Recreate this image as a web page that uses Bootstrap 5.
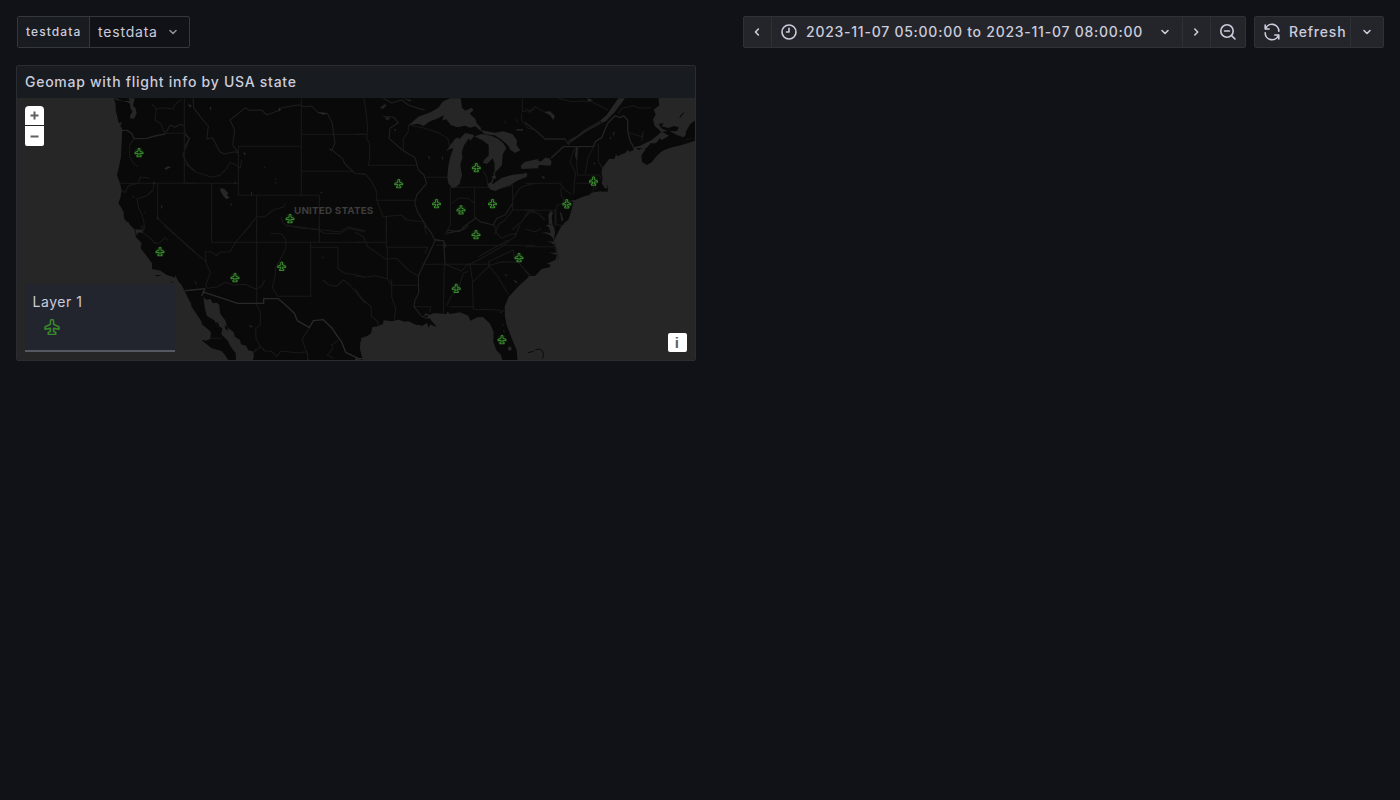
<!DOCTYPE html>
<html lang="en">
<head>
<meta charset="utf-8">
<title>Geomap dashboard</title>
<link href="https://cdn.jsdelivr.net/npm/bootstrap@5.3.0/dist/css/bootstrap.min.css" rel="stylesheet">
<style>
body{background:#111217;color:#ccccdc;font-family:Inter,"Liberation Sans",sans-serif;font-size:14px;line-height:22px;letter-spacing:.15px}
.toolbar{height:32px}
.variable{border:1px solid #36373d;border-radius:2px;width:173px;height:32px;margin-left:1px}
.variable-label{background:#181b1f;border-right:1px solid #36373d;width:72px;font-size:12px;font-weight:500}
.tool-btn{--bs-btn-bg:#24252b;--bs-btn-color:#ccccdc;--bs-btn-border-color:#303137;--bs-btn-hover-bg:#2c2d33;--bs-btn-hover-color:#ccccdc;--bs-btn-border-radius:2px;--bs-btn-font-size:14px;--bs-btn-font-weight:500;--bs-btn-line-height:22px;--bs-btn-padding-x:0;--bs-btn-padding-y:0;background:#24252b;height:32px;white-space:nowrap}
.w-arrow{width:29px;padding-right:2px}.w-range{width:412px}.w-zoom{width:36px}.w-refresh{width:97px}.w-menu{width:34px}
.panel{width:680px;height:296px;background:#181b1f;border:1px solid #2b2c31;border-radius:2px}
.panel-title{height:32px;font-size:14px;font-weight:500;line-height:32px}
.geomap{height:262px;background:#262626}
.zoom-key{width:19px;height:19px;background:#fff;color:#606060;font:bold 15px/20px "Liberation Sans",sans-serif}
.legend{width:150px;height:68px;left:8px;bottom:8px;background:#22252e;border-bottom:2px solid #555961}
.ln{fill:none;stroke:#191919;stroke-width:3.2;stroke-linejoin:round}
.ln2{fill:none;stroke:#232323;stroke-width:4;stroke-linejoin:round}
.sea{fill:#262626}.soil{fill:#090909}
.ic{fill:none;stroke:currentColor;stroke-width:1.6;stroke-linecap:round;stroke-linejoin:round}
</style>
</head>
<body>
<header class="d-flex justify-content-between mx-3 mt-3 toolbar">
  <div class="variable d-flex">
    <label class="variable-label d-flex align-items-center ps-2"><span style="letter-spacing:1.1px">testdata</span></label>
    <div class="d-flex flex-fill align-items-center justify-content-between ps-2 pe-2"><span style="letter-spacing:.8px">testdata</span>
      <svg class="ic" width="16" height="16" style="color:#8e8e99"><path d="M5 6.5 8 9.5 11 6.5"/></svg></div>
  </div>
  <div class="d-flex gap-2">
    <div class="btn-group">
      <button class="btn tool-btn w-arrow d-flex align-items-center justify-content-center"><svg class="ic" width="16" height="16"><path d="M9.4 5 6.5 8 9.4 11"/></svg></button>
      <button class="btn tool-btn w-range d-flex align-items-center"><svg class="ic" width="18" height="18" style="margin-left:8px"><circle cx="9" cy="9" r="7"/><path d="M9 5.3V9H6.5"/></svg><span style="margin-left:8px;letter-spacing:.75px">2023-11-07 05:00:00 to 2023-11-07 08:00:00</span><svg class="ic ms-auto" width="16" height="16" style="margin-right:9px"><path d="M5 6.5 8 9.5 11 6.5"/></svg></button>
      <button class="btn tool-btn w-arrow d-flex align-items-center justify-content-center"><svg class="ic" width="16" height="16"><path d="M6.8 5 9.7 8 6.8 11"/></svg></button>
      <button class="btn tool-btn w-zoom d-flex align-items-center justify-content-center"><svg class="ic" width="18" height="18"><circle cx="8" cy="8" r="6.2"/><path d="M5.5 8h5M12.6 12.6 16 16"/></svg></button>
    </div>
    <div class="btn-group">
      <button class="btn tool-btn w-refresh d-flex align-items-center"><svg class="ic" width="18" height="18" style="margin-left:8px"><path d="M2.2 2v4h4M2.6 5.8A6.8 6.8 0 0 1 15.8 8.2M15.8 16v-4h-4M15.4 12.2A6.8 6.8 0 0 1 2.2 9.8"/></svg><span style="margin-left:8px;letter-spacing:.8px">Refresh</span></button>
      <button class="btn tool-btn w-menu d-flex align-items-center justify-content-center"><svg class="ic" width="16" height="16"><path d="M5 6.5 8 9.5 11 6.5"/></svg></button>
    </div>
  </div>
</header>
<main class="panel ms-3 overflow-hidden" style="margin-top:17px">
  <div class="panel-title px-2"><span style="letter-spacing:.73px">Geomap with flight info by USA state</span></div>
  <div class="geomap position-relative">
  <svg class="d-block" width="678" height="262" viewBox="17 98 678 262">
    <defs><symbol id="plane" viewBox="0 0 16 16" overflow="visible"><path d="M8 .4C6.9 .4 6.4 1.5 6.4 2.6V5.3L1 8V10.2L6.4 9.4V12.4L4.3 13.5V15.5H11.7V13.5L9.6 12.4V9.4L15 10.2V8L9.6 5.3V2.6C9.6 1.5 9.1 .4 8 .4Z" fill="none" stroke="#37872d" stroke-linejoin="round"/></symbol></defs>
    <rect class="soil" x="17" y="98" width="678" height="262"/>
    <!-- Pacific northwest -->
    <g transform="translate(15 95) scale(.33333)">
      <path class="sea" d="M0 0H293L300 20 304 24 302 45 309 65 312 85 322 80 316 92 322 102 320 145 318 185 312 215 306 240 314 262 320 285 317 305 310 325 320 340 326 352 327 370 340 388 352 403 362 412 360 430H0Z"/>
      <path class="sea" d="M296 9 304 15 335 21 345 26 346 38 352 50 345 62 347 72 358 70 365 55 362 40 354 32 359 10H340L345 18 322 18 304 10Z"/>
      <path class="soil" d="M300 16 322 24 340 27 343 40 350 50 343 58 343 80 310 80 303 45Z"/>
      <path class="ln2" d="M321 106H336L350 115 357 131 395 130 420 123 450 117"/>
      <path class="ln" style="stroke:#1f1f1f" d="M450 117 456 107 466 90 480 97 496 88 508 92 510 116 524 130 503 180 520 210 540 230"/>
      <path class="ln" d="M411 28 424 42 420 75 438 87 446 108 456 115H510M424 42 450 38 474 43 480 28 500 14M508 10V266M314 265H540M428 265V370L540 472M357 131 344 150V185L355 205 370 215M320 285 330 293 340 272 370 265 376 246 405 250M417 265 414 285 395 303 366 311 371 340 382 360 388 390 378 410"/>
      <path d="M448 220 460 214 468 217 452 224ZM413 262H419L417 270ZM437 329 443 335 439 342ZM425 366 431 368 429 376ZM352 305l5-2-2 6ZM388 350l3 2-2 4Z" fill="#262626"/>
    </g>
    <!-- California -->
    <g transform="translate(15 225) scale(.33333)">
      <path class="sea" d="M0-10H340L345 0 358 13 362 35 380 55 377 70 400 100 411 115 411 132 437 137 455 150 476 156 500 180 515 210 530 245 560 290V420H0Z"/>
      <path class="sea" d="M360 13 380 14 384 24 370 22 366 32Z"/>
      <path class="ln" d="M378 0 385 25 405 38 420 55 435 53 450 38 460 47M385 18 390 0M447 0 540 82M505 198 560 193"/>
      <path class="soil" d="M421 151 430 150 440 152 425 154ZM466 168 475 174 470 174Z"/>
    </g>
    <!-- Rockies -->
    <g transform="translate(185 95) scale(.33333)">
      <path class="ln" d="M349 10V301M349 118H540M349 229H508M160 301V154H349M160 301H403V420M0 265H160M80 265V420M215 301V420M0 205 30 230 60 240 80 247 105 241 125 220 135 203 150 208 165 220 170 195"/>
      <path class="ln2" d="M24 10 26 38 48 68 70 93 65 132 82 128 105 170 118 177 150 170 160 174 143 150 149 105 135 75 182 38 192 46 230 45 245 60 285 45 290 38 340 30 360 35 380 33 400 54 427 55 442 85 450 145 441 165 472 190 480 207 510 235 540 238M0 120 12 130 0 155" style="stroke-width:3.2;stroke:#1e1e1e"/>
      <path class="ln" d="M300 325 297 335 265 345 240 365 215 365 175 415M288 365 293 382 305 393 345 395 385 403 465 410 490 395 540 408"/>
      <path d="M105 280 117 281 123 287 130 295 126 300 134 308 124 313 117 305 107 290ZM74 36 79 36 77 49ZM283 37l5 8-10 5ZM175 171 184 176 178 180ZM148 260 153 262 150 270ZM270 248l3 4-3 5ZM272 260l3 4-3 3ZM198 291h3v9h-3ZM237 214l3 3-3 3ZM136 325l5 2-3 7ZM430 161l10 1-1 5ZM404 291l10 1-4 3ZM397 50l31 5-13 5ZM8 28l12 2-4 9Z" fill="#272727"/>
    </g>
    <!-- Southwest and northern Mexico -->
    <g transform="translate(185 225) scale(.33333)">
      <path class="sea" d="M-30 150 0 207 18 235 20 255 35 270 45 293 68 312 78 322 76 342 63 347 55 345 50 346 80 370 110 378 120 390 131 407H-30Z"/>
      <path class="sea" d="M55 217 66 225 76 221 83 235 96 233 103 240 105 265 122 288 126 307 145 320 150 335 165 345 168 358 183 362 190 376 203 379 207 392 203 407H153L152 385 137 365 128 347 109 328 112 310 94 300 88 286 66 273 60 253Z"/>
      <path class="soil" d="M90 291 99 293 103 304 96 302ZM119 301 126 306 130 317 121 312Z"/>
      <path class="sea" d="M540 334 526 350 525 375 540 405Z"/>
      <path class="ln" d="M80 0V52H540M215 0V240L226 262V300L212 310 213 340 226 365 240 378 260 379 275 395 288 378 340 384 365 380 370 405M377 52V214H278M377 67H459V132L480 145 510 149 540 157M403 0V52M0 57 62 109M198 0 155 47 135 80 105 82 95 92 78 80H60L64 117 76 142 62 182 68 190 98 185 120 172 145 180 180 178 215 193 232 180 239 165M258 25 290 27 303 45 302 70 285 105 271 130 271 150 262 188 278 214M305 0 345 10 395 12 418 25 465 26 490 10 540 20M414 165 432 180 455 184 475 165 495 180 540 235M374 307 352 340 360 370 368 385V405M78 340H110M213 371 205 384 226 365M460 346 440 360 444 370 427 390 445 400"/>
      <path class="ln2" style="stroke:#292929" d="M0 197 61 191M52 200 158 235H236V221H280L305 243 328 265 337 287 373 308 385 287 415 284 440 308 458 335 469 349 482 382 520 400 540 402M60 193 50 213" />
      <path d="M192 300l12 3-8 5ZM24 166l12 8 0 5ZM410 98l7-5-4 8Z" fill="#222"/>
    </g>
    <!-- Midwest and Great Lakes -->
    <g transform="translate(355 95) scale(.33333)">
      <path class="ln" d="M26 10 32 42 38 95 35 130 44 145 43 195 40 211H183M0 118H36M205 247H280M65 316H180M0 236H30L50 260 65 290V316L85 365 140 360 155 375 205 380 215 420M94 366V420M286 275V390L270 420M288 277H390L440 280 473 270V345H540M359 277V368M290 325 310 310H340L359 325M145 165V130L160 110 160 90 210 100 250 113 278 130 285 160M473 345 450 375 430 390 418 420M473 315 490 285 500 275 540 265M470 405 500 380 520 350 540 350M502 10V50L515 48 540 42M500 55 500 75 520 100 540 105M385 230 395 245 400 275"/>
      <path class="ln2" d="M85 10 110 24 140 15 160 30 190 40 210 45M85 65 115 66 130 83 105 100 102 130 142 165 180 188 190 225 207 240 215 265 185 300 179 325 190 355 213 390M275 415 300 410 320 405 325 395 355 375 362 368 375 380 415 390 425 370 450 360 473 325" style="stroke:#1f1f1f;stroke-width:3.5"/>
      <path class="sea" d="M162 90 190 65 228 51 250 38 263 20 285 10H317L321 38 331 47 350 38 356 46 344 56 361 71 365 84 378 99 377 108 361 94 345 98 330 92 307 97 287 90 274 73 262 76 267 61 244 72 225 79 206 93 190 86Z"/>
      <path class="sea" d="M273 170 286 150 300 132 309 127 312 133 331 114 356 119 356 126 345 137 342 130 327 151 320 174 323 185 316 210 321 240 314 266 303 276 291 278 280 265 277 245 280 214 286 185 295 160 282 163Z"/>
      <path class="sea" d="M358 124 380 117 409 122 430 132 445 145 454 160 443 178 441 211 425 228 419 228 418 203 413 190 396 207 383 203 390 192 401 182 401 150 382 136ZM376 105 420 113 445 109 473 118 486 136 485 151 496 166 480 174 466 164 459 151 440 134 419 121 390 118ZM397 268 407 262 414 267 441 248 473 239 500 236 517 235 516 245 489 256 465 271 440 278 421 288 405 283ZM410 245 420 239 424 250 414 252ZM497 212 510 200 550 192V220L500 222Z"/>
      <path class="ln2" d="M421 228 416 240M414 252 409 266" style="stroke:#262626"/>
      <path d="M75 38 88 28 96 30 84 42ZM90 70 101 65 105 72 95 76ZM116 102 123 102 122 110ZM219 183l6 2-2 12ZM260 188l4-5-1 15ZM145 10 170 15 165 20ZM484 102h20v5h-20ZM450 70l2 15h-3ZM485 65l3 15h-3Z" fill="#222"/>
    </g>
    <!-- South and Gulf coast -->
    <g transform="translate(355 225) scale(.33333)">
      <path class="ln" d="M0 22 25 35 38 65 93 103 125 100 160 135 188 152M0 152 30 157 60 152 98 162 110 181H188M110 162V215L122 250 118 283M94 0V67H218L210 86M97 67V163M0 192 28 228 48 245 50 275 68 290 70 305M0 52H94M203 118H405M243 61H445L540 61M268 118 265 265M345 118 352 165 355 253 435 255 436 264 447 255M285 245H355M176 245H227L224 262M340 115 320 138 268 118M275 242 288 215 310 190 325 145 340 139M340 120 370 105 440 65 480 35 495 0M355 170 385 140 402 125 400 110 475 75 478 98M400 122 425 150 440 175 460 208M402 122 440 110 490 112 525 152M370 95 410 73 460 45M418 0 425 25 440 40 460 30 485 25"/>
      <path class="ln2" d="M210 0 228 22 240 47 220 90 206 118 190 152 191 205 180 225 177 245 199 273 224 283M243 47 266 47 270 118M275 15 310 20 330 10 340 0M238 42 265 48 272 60 266 76" style="stroke:#202020;stroke-width:3.6"/>
      <path class="sea" d="M26 410 18 385 15 364 22 350 17 340 38 332 48 325 52 307 68 304 84 297 86 286 110 289 130 284 150 290 160 289 185 300 205 300 218 289 230 300 242 305 225 287 214 283 220 271 207 272 210 265 226 269 236 264 274 267 278 260 285 267 315 262 340 272 346 287 367 277 384 276 405 296 416 320 415 350 424 376 438 389 443 410Z"/>
      <path class="soil" d="M190 297 207 282 224 280 232 290 246 306 226 298 221 308 216 294 200 303Z"/>
      <path class="sea" d="M488 410 485 375 471 342 455 300 450 275 449 245 461 216 485 190 500 175 515 162 525 153 560 153V410Z"/>
      <path class="sea" d="M459 367 466 364 471 371 465 378 459 375ZM443 295l4 5-4 2ZM445 315l5 7-5-1ZM474 164l11 5 3 9-10-9ZM448 148l10 2-6 3ZM496 46l6 6ZM0 399 17 402V408H0Z"/>
    </g>
    <!-- Northeast -->
    <g transform="translate(525 95) scale(.33333)">
      <path class="sea" d="M400 10 403 31 386 44 392 58 384 74 389 93 403 105 407 111 432 107 455 120 476 127 490 110 500 85 518 75V103L508 130 484 132 479 142 445 155 420 163 397 179 380 202 366 209 351 200 350 181 363 161 355 158 341 165 325 154 326 165 314 170 308 165 301 174 290 178 278 184 273 177 269 191 252 192 241 207 232 218 229 235 233 250 230 265 241 281 248 279 245 268 250 277 247 290 225 289 205 292 175 304 148 315 132 318 145 321 139 347 130 375 117 384 108 410 103 430H520V0Z"/>
      <path class="sea" d="M320 158 345 152 380 135 405 115 412 110 432 122 395 145 365 160Z"/>
      <path class="soil" d="M364 160 377 145 393 145 404 130 414 139 400 148 425 153 450 145 480 142 480 135 512 128V137L470 150 436 158 408 169 392 186 378 202 366 209 351 200 350 182ZM400 87 416 84 410 94 430 99 448 93 462 97 455 109 428 108 411 101ZM482 112 495 88 510 77V96L503 115 485 124ZM150 306 185 295 199 298 173 305 149 316 142 314ZM231 289l5-3-1 4ZM243 291l5-2v3ZM463 67l10-13 6-2-14 17Z"/>
      <path class="sea" d="M0 205 28 200 50 198 60 188 73 190 80 200 76 212 45 210 30 216 0 218ZM225 77 245 60 260 38 280 10H300L270 50 244 77 232 83ZM153 155 160 155 159 180 155 200 150 180ZM0 230 5 238 0 245ZM70 360 77 348 84 352 80 367 83 393 91 402 82 400 77 384 75 392 80 412 90 420H82L72 400ZM104 348 110 357 115 374 110 380ZM264 113l6-3-5 15ZM255 125l4 2-3 8ZM205 205l5-3v8ZM48 242l12 4-3 7ZM55 50 75 49 90 63 85 75 74 60ZM186 10 205 15 190 20Z"/>
      <path class="ln2" d="M78 190 115 155H205L211 140 230 128 239 106 249 84 270 62 285 68 296 62 308 75V108L316 140 325 154"/>
      <path class="ln2" style="stroke:#1f1f1f" d="M0 82 40 113 60 132H120L132 150M130 138 155 125 180 105 225 80M130 145 180 110 230 83"/>
      <path class="ln" d="M0 265H105L120 285 140 298M0 346H90L100 328 125 325 108 300V280M90 346V390H108M93 345 93 390M220 145V200L232 218M158 155 155 210 158 240H220L230 250M155 265H205V290M206 155 190 185 180 237M146 298 148 265 152 235 135 200 150 155M200 263H212V285M308 112 350 125 355 110 350 140M280 55 290 40 325 32 345 40 380 38M0 365 20 350 40 355 60 375M0 40 15 52 30 35 55 50M100 10 140 20 175 18 200 20 250 45"/>
    </g>
    <!-- Carolinas and the Bahamas -->
    <g transform="translate(525 225) scale(.33333)">
      <path class="sea" d="M0 170 12 153 30 153 50 132 74 127 77 119 65 116 91 105 96 90 70 82 93 84 90 62 80 53 64 49 87 50 84 39 74 30 50 20 76 24 78 12 62 0H83L90 18 87 46 100 20 111 0H512V405H0Z"/>
      <path class="ln" d="M0 65H90M0 138 16 153M0 12 30 20 50 10"/>
      <path d="M90 53 95 77 100 98 97 107" fill="none" stroke="#151515" stroke-width="2"/>
      <path d="M9 383 26 379M31 375 43 372 53 378 56 389 52 402" fill="none" stroke="#0c0c0c" stroke-width="3"/>
    </g>
    <text x="294" y="213.7" textLength="79.5" lengthAdjust="spacingAndGlyphs" font-family="Inter,sans-serif" font-weight="700" font-size="9.5" fill="#3d3d3d">UNITED STATES</text>
    <g id="flights"></g>
  </svg>
  <div class="position-absolute top-0 start-0 m-2 d-flex flex-column" style="gap:1px">
    <div class="zoom-key rounded-top-1 d-flex align-items-center justify-content-center"><svg width="9" height="9" stroke="#606060" stroke-width="2"><path d="M.5 4.5h8M4.5.5v8"/></svg></div><div class="zoom-key d-flex align-items-center justify-content-center" style="height:20px;border-radius:0 0 2px 2px"><svg width="9" height="9" stroke="#606060" stroke-width="2"><path d="M.5 4.5h8"/></svg></div>
  </div>
  <div class="legend position-absolute px-2" style="padding-top:7px">
    <div style="letter-spacing:.55px;margin-left:-.5px">Layer 1</div>
    <svg class="d-block" width="16" height="16" style="margin:6px 0 0 11px"><use href="#plane" stroke-width="1.6"/></svg>
  </div>
  <div class="zoom-key position-absolute bottom-0 end-0 m-2 text-center" style="border-radius:2px;padding-right:1px">i</div>
  </div>
</main>
<script>
const flights=[[139,152.5],[160,251.5],[235,277.5],[281.7,266.3],[290,218.5],[398.7,183.5],[436.5,203.5],[461,209.7],[492.5,203.5],[476.3,167.5],[476,234.5],[519,257.5],[456.2,288.3],[502,339.5],[566.8,203.7],[593.5,181]];
document.getElementById('flights').innerHTML=flights.map(([x,y])=>`<circle cx="${x}" cy="${y}" r="5" fill="#37872d" fill-opacity=".1"/><use href="#plane" x="${x-4.5}" y="${y-4.5}" width="9" height="9" stroke-width="1.9"/>`).join('');
</script>
<script src="https://cdn.jsdelivr.net/npm/bootstrap@5.3.0/dist/js/bootstrap.bundle.min.js"></script>
</body>
</html>
